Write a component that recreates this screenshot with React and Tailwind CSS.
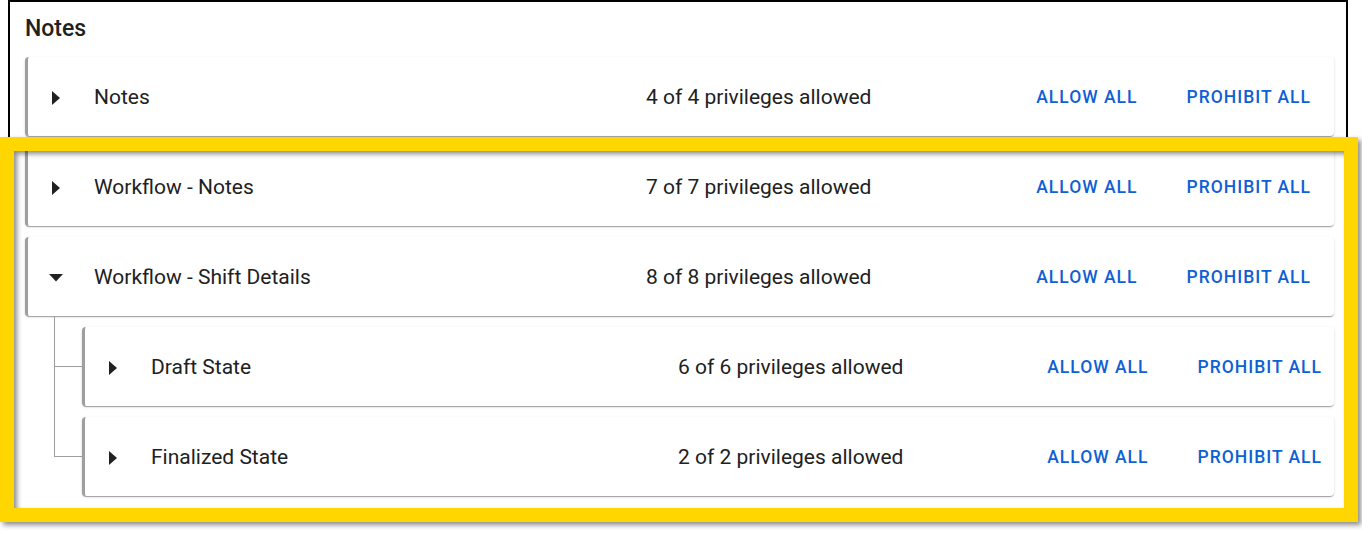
import React from "react";

const rows = [
  { label: "Notes", count: "4 of 4 privileges allowed", open: false },
  { label: "Workflow - Notes", count: "7 of 7 privileges allowed", open: false },
  {
    label: "Workflow - Shift Details",
    count: "8 of 8 privileges allowed",
    open: true,
    children: [
      { label: "Draft State", count: "6 of 6 privileges allowed" },
      { label: "Finalized State", count: "2 of 2 privileges allowed" },
    ],
  },
];

const Caret = ({ open }) => (
  <span className="flex w-[16px] h-[16px] items-center justify-center">
    {open ? (
      <svg width="14" height="8" viewBox="0 0 14 8">
        <path d="M0 0 L14 0 L7 7.5 Z" fill="#212121" />
      </svg>
    ) : (
      <svg width="8" height="14" viewBox="0 0 8 14">
        <path d="M0 0 L8 7 L0 14 Z" fill="#212121" />
      </svg>
    )}
  </span>
);

const Row = ({ item, nested }) => (
  <div className="flex h-[79px] items-center rounded-[4px] border-l-[3px] border-[#9e9e9e] bg-white pt-[2px] shadow-[0_2px_1px_-1px_rgba(0,0,0,0.2),0_1px_1px_0_rgba(0,0,0,0.14),0_1px_3px_0_rgba(0,0,0,0.12)]">
    <div className="pl-[20px]">
      <Caret open={item.open} />
    </div>
    <span
      className={
        "ml-[30px] text-[21px] text-[#212121] " +
        (nested ? "w-[527px]" : "w-[552px]")
      }
    >
      {item.label}
    </span>
    <span className="text-[21px] text-[#212121]">{item.count}</span>
    <div
      className={
        "ml-auto flex items-center gap-[29px] " +
        (nested ? "pr-[2px]" : "pr-[13px]")
      }
    >
      <button className="px-[10px] py-[6px] text-[17.5px] font-medium tracking-[1px] text-[#0f60d4]">
        ALLOW ALL
      </button>
      <button className="px-[10px] py-[6px] text-[17.5px] font-medium tracking-[1px] text-[#0f60d4]">
        PROHIBIT ALL
      </button>
    </div>
  </div>
);

export default function App() {
  return (
    <div className="relative min-h-[537px] bg-white font-['Roboto','Liberation_Sans',sans-serif]">
      <div className="ml-[8px] mr-[14px] border-2 border-black pl-[15px] pr-[12px] pt-[9px] pb-[14px]">
        <h2 className="mb-[10px] text-[23px] font-medium leading-[36px] text-[#212121]">
          Notes
        </h2>
        <div className="flex flex-col gap-[11px]">
          {rows.map((item) => (
            <div key={item.label}>
              <Row item={item} />
              {item.children && (
                <div className="flex flex-col">
                  {item.children.map((child, i) => {
                    const last = i === item.children.length - 1;
                    return (
                      <div key={child.label} className="flex pt-[11px]">
                        <div className="flex w-[57px] flex-col">
                          <div className="ml-[29px] -mt-[11px] h-[51px] w-[28px] border-b border-l border-[#9e9e9e]" />
                          {!last && (
                            <div className="ml-[29px] flex-1 border-l border-[#9e9e9e]" />
                          )}
                        </div>
                        <div className="flex-1">
                          <Row item={child} nested />
                        </div>
                      </div>
                    );
                  })}
                </div>
              )}
            </div>
          ))}
        </div>
      </div>
      <div className="pointer-events-none absolute left-0 top-[137px] h-[385px] w-[1358px] border-[14px] border-[#ffd600] shadow-[3px_3px_5px_rgba(0,0,0,0.45),inset_3px_3px_5px_rgba(0,0,0,0.45)]" />
    </div>
  );
}
